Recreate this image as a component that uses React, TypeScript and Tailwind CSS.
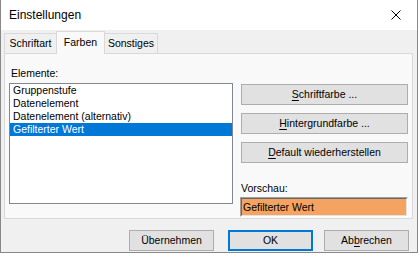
import React from "react";

const font = { fontFamily: '"Liberation Sans", Arial, sans-serif' };

const items = ["Gruppenstufe", "Datenelement", "Datenelement (alternativ)", "Gefilterter Wert"];

function SideButton({ children }: { children: React.ReactNode }) {
  return (
    <div className="h-[21px] w-[167px] border border-[#adadad] bg-[#e1e1e1] flex items-center justify-center text-[10.5px] leading-[13px] text-black">
      {children}
    </div>
  );
}

function DialogButton({ children, primary, className }: { children: React.ReactNode; primary?: boolean; className?: string }) {
  return (
    <div
      className={
        "h-[21px] w-[85px] bg-[#e1e1e1] flex items-center justify-center text-[10.5px] leading-[13px] text-black " +
        (primary ? "border-2 border-[#0078d7] " : "border border-[#adadad] ") +
        (className ?? "")
      }
    >
      {children}
    </div>
  );
}

export default function App() {
  const selected = 3;

  return (
    <div className="w-[420px] h-[255px] bg-white" style={font}>
      <div className="w-[418px] h-[253px] flex flex-col border-l border-r border-b border-[#888888] bg-[#f0f0f0]">
        {/* Title bar */}
        <div className="h-[30px] bg-white flex items-center justify-between pl-[8px]">
          <span className="text-[12px] leading-[14px] text-black">Einstellungen</span>
          <svg width="10" height="10" viewBox="0 0 10 10" className="mr-[16px]">
            <path d="M0.5 0.5 L9.5 9.5 M9.5 0.5 L0.5 9.5" stroke="#000" strokeWidth="1" fill="none" />
          </svg>
        </div>

        {/* Tabs */}
        <div className="pt-[1px] pl-[3px] pr-[4px]">
          <div className="flex items-end h-[22px]">
            <div className="h-[20px] w-[53px] border border-b-0 border-[#d9d9d9] bg-[#f0f0f0] flex items-center justify-center text-[10.5px] leading-[13px] text-black">
              Schriftart
            </div>
            <div className="relative z-10 -mb-px h-[23px] w-[49px] -ml-px border border-b-0 border-[#d9d9d9] bg-[#f9f9f9] flex items-center justify-center pb-[1px] text-[10.5px] leading-[13px] text-black">
              Farben
            </div>
            <div className="h-[20px] w-[54px] -ml-px border border-b-0 border-[#d9d9d9] bg-[#f0f0f0] flex items-center justify-center text-[10.5px] leading-[13px] text-black">
              Sonstiges
            </div>
          </div>

          {/* Panel */}
          <div className="h-[166px] border border-[#d9d9d9] bg-[#f9f9f9] flex pl-[4px]">
            <div className="pt-[13px] flex flex-col">
              <div className="h-[13px] leading-[13px] text-[10.5px] text-black pl-[2px]">Elemente:</div>
              <div className="mt-[3px] h-[121px] w-[224px] border border-[#828790] bg-white">
                {items.map((it, i) => (
                  <div
                    key={it}
                    className={
                      "h-[13px] leading-[13px] text-[10.5px] pl-[3px] " +
                      (i === selected ? "bg-[#0078d7] text-white" : "text-black")
                    }
                  >
                    {it}
                  </div>
                ))}
              </div>
            </div>

            <div className="ml-[8px] pt-[30px] flex flex-col">
              <div className="flex flex-col gap-[8px]">
                <SideButton>
                  <span className="underline underline-offset-[2px]">S</span>chriftfarbe ...
                </SideButton>
                <SideButton>
                  <span className="underline underline-offset-[2px]">H</span>intergrundfarbe ...
                </SideButton>
                <SideButton>
                  <span className="underline underline-offset-[2px]">D</span>efault wiederherstellen
                </SideButton>
              </div>
              <div className="mt-[19px] h-[13px] leading-[13px] text-[10.5px] text-black">Vorschau:</div>
              <div className="mt-[2px] -ml-px w-[168px] h-[20px] border border-t-[#a0a0a0] border-l-[#a0a0a0] border-b-white border-r-white">
                <div className="h-full border border-t-[#696969] border-l-[#696969] border-b-[#e3e3e3] border-r-[#e3e3e3] bg-[#f4a460] flex items-center pl-[1px] text-[10.5px] leading-[13px] text-black">
                  Gefilterter Wert
                </div>
              </div>
            </div>
          </div>
        </div>

        {/* Bottom buttons */}
        <div className="mt-[11px] flex pl-[128px]">
          <DialogButton>Übernehmen</DialogButton>
          <DialogButton primary className="ml-[14px]">OK</DialogButton>
          <DialogButton className="ml-[11px]">
            Ab<span className="underline underline-offset-[2px]">b</span>rechen
          </DialogButton>
        </div>
      </div>
    </div>
  );
}
